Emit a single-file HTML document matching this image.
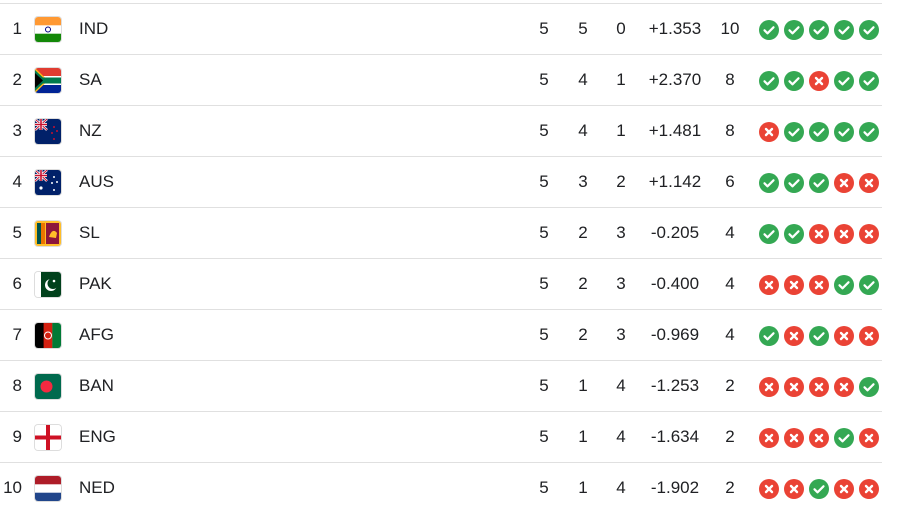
<!DOCTYPE html>
<html><head><meta charset="utf-8"><style>
body{margin:0;background:#fff;font-family:"Liberation Sans",Arial,sans-serif;color:#202124;font-size:17px;width:913px;height:526px;overflow:hidden;position:relative}
.r{position:absolute;left:0;width:882px;height:51px;border-top:1px solid #e0e0e0}
.r span{position:absolute;top:15px;line-height:20px}
.rk{left:0;width:22px;text-align:right}
.fl{position:absolute;left:35px;top:13px;width:26px;height:25px;border-radius:3px;overflow:hidden;box-shadow:0 0 0 1px #ddd}
.fl svg{display:block}
.tm{left:79px}
.c{width:40px;text-align:center}
.p{left:524px}.w{left:563px}.l{left:601px}
.n{left:640px;width:70px;text-align:center}
.pt{left:712px;width:36px;text-align:center}
.res{position:absolute;left:759px;top:16px;display:flex;gap:5px}
.res i{width:20px;height:20px;border-radius:50%;display:block}
.g{background:#34a853}.x{background:#ea4335}
</style></head><body>
<svg width="0" height="0" style="position:absolute"><defs>
<symbol id="ck" viewBox="0 0 20 20"><path d="M5.5 10.3l3 3 6-6" stroke="#fff" stroke-width="2.2" fill="none" stroke-linecap="round" stroke-linejoin="round"/></symbol>
<symbol id="xx" viewBox="0 0 20 20"><path d="M7 7l6 6M13 7l-6 6" stroke="#fff" stroke-width="2.4" fill="none" stroke-linecap="round"/></symbol>
</defs></svg>
<div id="t"></div>
<script>
const F={
IND:'<rect width="26" height="25" fill="#fff"/><rect width="26" height="8.3" fill="#ff9933"/><rect y="16.7" width="26" height="8.3" fill="#138808"/><circle cx="13" cy="12.5" r="2.5" fill="none" stroke="#000080" stroke-width="1"/>',
SA:'<rect width="26" height="25" fill="#fff"/><rect width="26" height="8" fill="#e03c31"/><rect y="17" width="26" height="8" fill="#002395"/><path d="M0 0L13 12.5L0 25Z" fill="#ffb612"/><path d="M0 9.5h26v6H0z" fill="#007a4d"/><path d="M0 2L11 12.5L0 23Z" fill="#007a4d"/><path d="M0 5L8 12.5L0 20Z" fill="#000"/>',
NZ:'<rect width="26" height="25" fill="#012169"/><path d="M0 0L12 11M12 0L0 11" stroke="#fff" stroke-width="2.5"/><path d="M0 0L12 11M12 0L0 11" stroke="#c8102e" stroke-width="1"/><path d="M6 0v11M0 5.5h12" stroke="#fff" stroke-width="3"/><path d="M6 0v11M0 5.5h12" stroke="#c8102e" stroke-width="1.6"/><circle cx="19" cy="8" r="1" fill="#c8102e"/><circle cx="22" cy="12" r="1" fill="#c8102e"/><circle cx="17" cy="14" r="1" fill="#c8102e"/><circle cx="19" cy="20" r="1" fill="#c8102e"/>',
AUS:'<rect width="26" height="25" fill="#012169"/><path d="M0 0L12 11M12 0L0 11" stroke="#fff" stroke-width="2.5"/><path d="M0 0L12 11M12 0L0 11" stroke="#c8102e" stroke-width="1"/><path d="M6 0v11M0 5.5h12" stroke="#fff" stroke-width="3"/><path d="M6 0v11M0 5.5h12" stroke="#c8102e" stroke-width="1.6"/><circle cx="6" cy="18" r="1.6" fill="#fff"/><circle cx="19" cy="7" r="1" fill="#fff"/><circle cx="22" cy="12" r="1" fill="#fff"/><circle cx="17" cy="13" r="1" fill="#fff"/><circle cx="19" cy="20" r="1" fill="#fff"/>',
SL:'<rect width="26" height="25" fill="#ffbe29"/><rect x="2" y="2" width="4" height="21" fill="#00534e"/><rect x="6" y="2" width="4" height="21" fill="#eb7400"/><rect x="11" y="2" width="13" height="21" fill="#8d153a"/><path d="M14 16c2-6 5-8 8-4l-1 5z" fill="#ffbe29"/>',
PAK:'<rect width="26" height="25" fill="#fff"/><rect x="6" width="20" height="25" fill="#01411c"/><circle cx="16" cy="13" r="6" fill="#fff"/><circle cx="18" cy="11.5" r="5.5" fill="#01411c"/><circle cx="19" cy="9" r="1.3" fill="#fff"/>',
AFG:'<rect width="9" height="25" fill="#000"/><rect x="8.6" width="8.8" height="25" fill="#d32011"/><rect x="17.3" width="8.7" height="25" fill="#007a36"/><circle cx="13" cy="12.5" r="3.5" fill="none" stroke="#fff" stroke-width="1"/>',
BAN:'<rect width="26" height="25" fill="#006a4e"/><circle cx="11.5" cy="12.5" r="6" fill="#f42a41"/>',
ENG:'<rect width="26" height="25" fill="#fff"/><rect x="11" width="4" height="25" fill="#ce1124"/><rect y="10.5" width="26" height="4" fill="#ce1124"/>',
NED:'<rect width="26" height="25" fill="#fff"/><rect width="26" height="8.3" fill="#ae1c28"/><rect y="16.7" width="26" height="8.3" fill="#21468b"/>'};
const D=[["IND",5,0,"+1.353",10,"ggggg"],["SA",4,1,"+2.370",8,"ggxgg"],["NZ",4,1,"+1.481",8,"xgggg"],["AUS",3,2,"+1.142",6,"gggxx"],["SL",2,3,"-0.205",4,"ggxxx"],["PAK",2,3,"-0.400",4,"xxxgg"],["AFG",2,3,"-0.969",4,"gxgxx"],["BAN",1,4,"-1.253",2,"xxxxg"],["ENG",1,4,"-1.634",2,"xxxgx"],["NED",1,4,"-1.902",2,"xxgxx"]];
let h="";
D.forEach((d,i)=>{
h+=`<div class="r" style="top:${3+i*51}px"><span class="rk">${i+1}</span><div class="fl"><svg width="26" height="25">${F[d[0]]}</svg></div><span class="tm">${d[0]}</span><span class="c p">5</span><span class="c w">${d[1]}</span><span class="c l">${d[2]}</span><span class="n">${d[3]}</span><span class="pt">${d[4]}</span><div class="res">${[...d[5]].map(c=>`<i class="${c}"><svg width="20" height="20"><use href="#${c=="g"?"ck":"xx"}"/></svg></i>`).join("")}</div></div>`;
});
document.getElementById("t").innerHTML=h;
</script>
</body></html>
